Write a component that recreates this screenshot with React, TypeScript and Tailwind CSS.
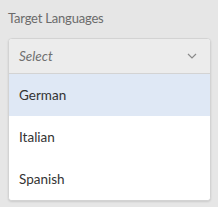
export default function App() {
  const options = ["German", "Italian", "Spanish"];
  return (
    <div
      className="w-[218px] h-[207px] bg-[#e6e6e6] pt-[9px] px-[8px]"
      style={{ fontFamily: 'Lato, "Noto Sans", sans-serif' }}
    >
      <div className="text-[13px] leading-[18px] text-[#6b6b6b] tracking-[-0.2px]">Target Languages</div>
      <div className="mt-[11px] w-[203px] rounded-[4px] border border-[#d3d3d3] bg-white overflow-hidden shadow-[0_1px_2px_rgba(0,0,0,0.12)]">
        <div className="h-[35px] bg-[#ececec] border-b border-[#d3d3d3] flex items-center justify-between pl-[10px] pr-[13px]">
          <span className="italic text-[13.5px] text-[#707070]">Select</span>
          <svg width="10" height="6" viewBox="0 0 10 6" fill="none">
            <path d="M1 1l4 4 4-4" stroke="#8a8a8a" strokeWidth="1.2" />
          </svg>
        </div>
        {options.map((o, i) => (
          <div
            key={o}
            className={`h-[42px] flex items-center pl-[10px] text-[13.5px] text-[#333] ${i === 0 ? "bg-[#dfe8f5]" : "bg-white"}`}
          >
            {o}
          </div>
        ))}
      </div>
    </div>
  );
}
